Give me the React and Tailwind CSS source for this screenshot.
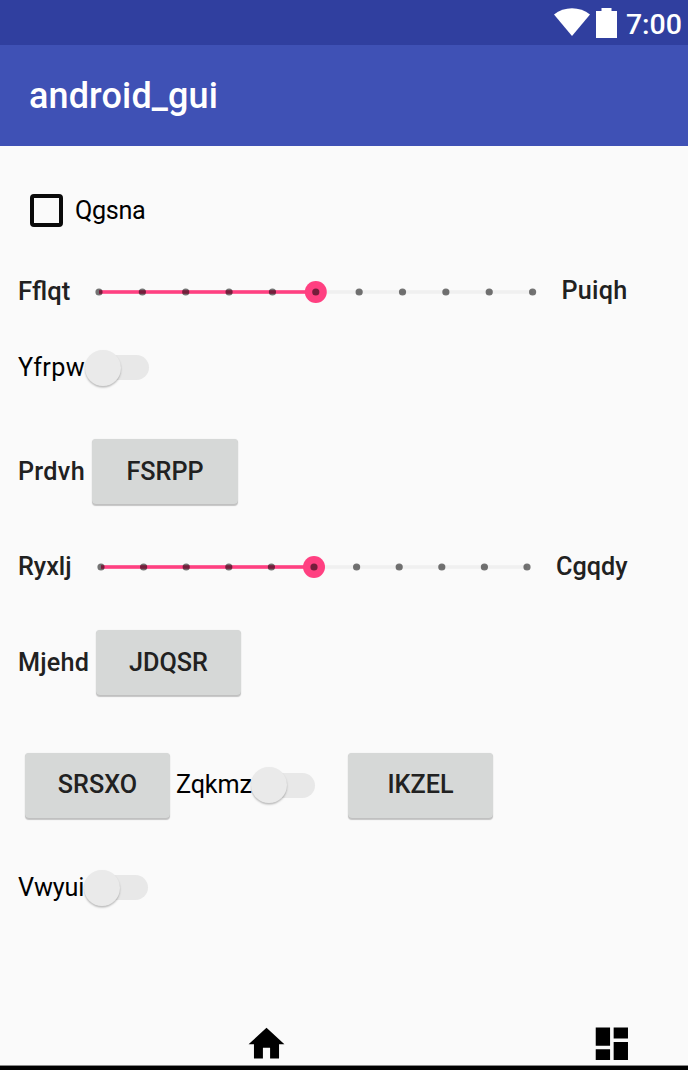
function Label({ children, className = "" }) {
  return <span className={`shrink-0 whitespace-nowrap ${className}`}>{children}</span>;
}

function PushButton({ children, className = "" }) {
  return (
    <button
      className={`h-[65px] w-[145px] shrink-0 rounded-[4px] bg-[#d6d8d7] text-center font-medium text-[#212121] shadow-[0_1.5px_1px_rgba(0,0,0,0.22),0_0_1px_rgba(0,0,0,0.14)] ${className}`}
    >
      {children}
    </button>
  );
}

function Switch() {
  return (
    <span className="flex h-[37px] w-[65px] shrink-0 items-center">
      <span className="z-10 h-[36px] w-[36px] shrink-0 rounded-full bg-[#eaeaea] shadow-[0_1.5px_2px_rgba(0,0,0,0.26)]" />
      <span className="-ml-[23px] h-[25px] w-[51px] shrink-0 rounded-full bg-[#e8e8e8]" />
    </span>
  );
}

function Slider({ step, className = "" }) {
  const ticks = Array.from({ length: 11 }, (_, i) => 11 + i * step);
  const end = 11 + 10 * step;
  const value = 11 + 5 * step;
  return (
    <svg className={`shrink-0 ${className}`} width={end + 11} height="24" viewBox={`0 0 ${end + 11} 24`}>
      <rect x="11" y="10.2" width={end - 11} height="3.6" fill="#f0f0f0" />
      <rect x="11" y="10.2" width={value - 11} height="3.6" fill="#ff4081" />
      <circle cx={value} cy="12" r="11" fill="#ff4081" />
      {ticks.map((x) => (
        <circle key={x} cx={x} cy="12" r="3.6" fill="#000000" fillOpacity="0.54" />
      ))}
    </svg>
  );
}

export default function App() {
  return (
    <div className="flex h-[1070px] w-[688px] flex-col overflow-hidden bg-[#fafafa] font-['Roboto',sans-serif] text-[25.2px] leading-[30px] text-black">
      <div className="flex h-[45px] shrink-0 items-center justify-end bg-[#303f9f] pr-[6px] text-white">
        <svg width="36" height="29" viewBox="0 0 36 29" className="mr-[6px] shrink-0">
          <path d="M0 6.5C10-1.7 26-1.7 36 6.5L18 28z" fill="currentColor" />
        </svg>
        <svg width="21" height="30" viewBox="0 0 21 30" className="mr-[9px] shrink-0">
          <path d="M5.5 0h10v3H21v27H0V3h5.5z" fill="currentColor" />
        </svg>
        <span className="pt-[4px] text-[28.5px] font-medium">7:00</span>
      </div>
      <header className="flex h-[101px] shrink-0 items-center bg-[#3f51b5] pl-[29px] text-white">
        <h1 className="text-[36px] font-medium leading-[42px] tracking-[0.13px]">android_gui</h1>
      </header>
      <main className="flex flex-1 flex-col pl-[18px]">
        <div className="mt-[46px] flex h-[37px] shrink-0 items-center pl-[12px]">
          <span className="h-[33px] w-[33px] shrink-0 rounded-[4px] border-4 border-[#0a0a0a]" />
          <Label className="ml-[12px] tracking-[-0.35px]">Qgsna</Label>
        </div>
        <div className="mt-[42px] flex h-[40px] shrink-0 items-center font-medium text-[#212121]">
          <Label className="w-[70px] text-[25.6px]">Fflqt</Label>
          <Slider step={43.36} className="mt-[1px]" />
          <Label className="ml-[18px] tracking-[0.2px]">Puiqh</Label>
        </div>
        <div className="mt-[38px] flex h-[37px] shrink-0 items-center">
          <Label className="w-[67px] tracking-[0.35px]">Yfrpw</Label>
          <Switch />
        </div>
        <div className="mt-[52px] flex h-[67px] shrink-0 items-center font-medium text-[#212121]">
          <Label className="w-[74px] tracking-[0.3px]">Prdvh</Label>
          <PushButton className="w-[146px]">FSRPP</PushButton>
        </div>
        <div className="mt-[42px] flex h-[40px] shrink-0 items-center font-medium text-[#212121]">
          <Label className="w-[72px]">Ryxlj</Label>
          <Slider step={42.6} />
          <Label className="ml-[18px]">Cgqdy</Label>
        </div>
        <div className="mt-[42px] flex h-[67px] shrink-0 items-center font-medium text-[#212121]">
          <Label className="w-[78px] tracking-[0.2px]">Mjehd</Label>
          <PushButton>JDQSR</PushButton>
        </div>
        <div className="mt-[56px] flex h-[66px] shrink-0 items-center pl-[7px]">
          <PushButton>SRSXO</PushButton>
          <Label className="ml-[6px] w-[75px] tracking-[-0.15px]">Zqkmz</Label>
          <Switch />
          <PushButton className="ml-[32px]">IKZEL</PushButton>
        </div>
        <div className="mt-[51px] flex h-[37px] shrink-0 items-center">
          <Label className="w-[66px] tracking-[-0.15px]">Vwyui</Label>
          <Switch />
        </div>
      </main>
      <nav className="flex h-[43px] shrink-0 justify-between pl-[245px] pr-[55px]">
        <svg width="43" height="43" viewBox="0 0 24 24">
          <path d="M10 20.4v-6h4v6h5v-8h3L12 3.2 2 12.4h3v8z" />
        </svg>
        <svg width="43" height="43" viewBox="0 0 24 24">
          <path d="M3.2 13.2h8V3.1H3.2zm0 8h8v-6h-8zm10 0h8V11.2h-8zm0-18.1v6.1h8V3.1z" />
        </svg>
      </nav>
      <div className="h-[5px] shrink-0 border-t border-[#888888] bg-black" />
    </div>
  );
}
